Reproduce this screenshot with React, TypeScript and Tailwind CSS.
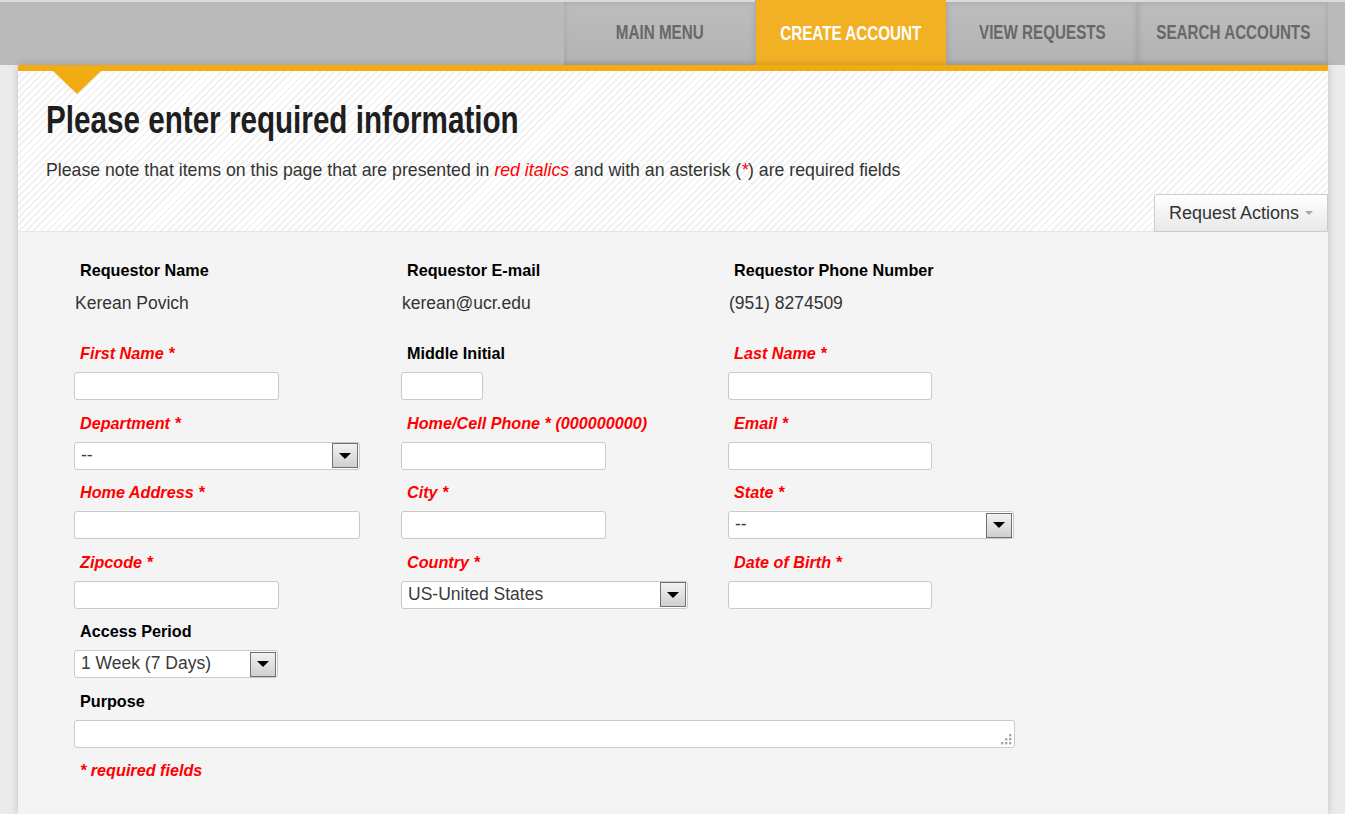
import React from "react";

const ff = { fontFamily: '"Liberation Sans", Arial, sans-serif' };

function Label({ text, req }: { text: string; req?: boolean }) {
  return (
    <div
      className={
        "h-[20px] leading-[20px] mb-[9px] pl-[6px] text-[16.2px] font-bold whitespace-nowrap " +
        (req ? "text-[#f00] italic" : "text-black")
      }
    >
      {text}
    </div>
  );
}

function TextInput({ w }: { w: string }) {
  return (
    <div className={"h-[28px] bg-white border border-[#c9c9c9] rounded-[3px] " + w} />
  );
}

function Select({ w, value }: { w: string; value: string }) {
  return (
    <div
      className={
        "h-[28px] bg-white border border-[#c9c9c9] rounded-[3px] flex items-center justify-between pl-[6px] pr-[1px] " +
        w
      }
    >
      <span className="text-[17.5px] text-[#3a3a3a] leading-none">{value}</span>
      <div className="w-[26px] h-[25px] border border-[#707070] bg-[linear-gradient(#f2f2f2,#cfcfcf)] flex items-center justify-center">
        <div className="w-0 h-0 border-l-[6px] border-r-[6px] border-t-[6px] border-l-transparent border-r-transparent border-t-black" />
      </div>
    </div>
  );
}

function Field({
  label,
  req,
  children,
}: {
  label: string;
  req?: boolean;
  children: React.ReactNode;
}) {
  return (
    <div className="mb-[12.5px]">
      <Label text={label} req={req} />
      {children}
    </div>
  );
}

const tabs = ["MAIN MENU", "CREATE ACCOUNT", "VIEW REQUESTS", "SEARCH ACCOUNTS"];

export default function App() {
  return (
    <div className="min-h-[814px] w-[1345px] bg-[#ebebeb] overflow-hidden" style={ff}>
      {/* top bar */}
      <div className="h-[65px] bg-[#bababa] border-t-2 border-[#dcdcdc] flex justify-end">
        <div className="flex mr-[17px] h-full">
          {tabs.map((t, i) => {
            const active = i === 1;
            return (
              <div
                key={t}
                className={
                  "w-[191px] flex items-center justify-center " +
                  (active
                    ? "bg-[#f2b124] -mt-[2px] h-[65px] text-white"
                    : "h-full pb-[3px] bg-[linear-gradient(#bdbdbd,#b3b3b3)] text-[#686868] shadow-[inset_0_0_6px_rgba(0,0,0,0.12)]") +
                  (i > 0 ? " border-l border-[#a9a9a9]" : "")
                }
              >
                <span className="inline-block text-[20px] font-bold scale-x-[0.76] whitespace-nowrap">
                  {t}
                </span>
              </div>
            );
          })}
        </div>
      </div>

      {/* panel */}
      <div className="ml-[18px] mr-[17px] bg-[#f4f4f4] border-t-[6px] border-[#f0ac12] relative shadow-[0_0_8px_rgba(0,0,0,0.18)] min-h-[749px]">
        <div className="absolute left-[35px] top-0 w-0 h-0 border-l-[24px] border-r-[24px] border-t-[23px] border-l-transparent border-r-transparent border-t-[#f0ac12] z-10" />
        {/* header */}
        <div className="h-[161px] pt-[27px] bg-[repeating-linear-gradient(135deg,#ffffff_0px,#ffffff_3px,#f2f2f2_3px,#f2f2f2_5px)] border-b border-[#e6e6e6]">
          <h1 className="pl-[28px] h-[44px] leading-[44px] whitespace-nowrap">
            <span className="inline-block origin-left scale-x-[0.78] text-[38px] font-bold text-[#1e1e1e] whitespace-nowrap">
              Please enter required information
            </span>
          </h1>
          <p className="pl-[28px] mt-[17px] h-[22px] leading-[22px] text-[17.7px] text-[#333] whitespace-nowrap">
            Please note that items on this page that are presented in{" "}
            <span className="italic text-[#f00]">red italics</span> and with an asterisk (
            <span className="italic text-[#f00]">*</span>) are required fields
          </p>
          <div className="flex justify-end mt-[13px]">
            <div className="h-[38px] w-[174px] border border-[#cccccc] bg-[linear-gradient(#ffffff,#e8e8e8)] flex items-center justify-center gap-[6px] text-[18px] text-[#333] rounded-tl-[2px]">
              <span>Request Actions</span>
              <div className="w-0 h-0 border-l-[4px] border-r-[4px] border-t-[4px] border-l-transparent border-r-transparent border-t-[#aaa]" />
            </div>
          </div>
        </div>

        {/* form */}
        <div className="pl-[56px] pt-[28px] pb-[30px]">
          <div className="grid grid-cols-[327px_327px_327px]">
            {[
              ["Requestor Name", "Kerean Povich"],
              ["Requestor E-mail", "kerean@ucr.edu"],
              ["Requestor Phone Number", "(951) 8274509"],
            ].map(([l, v]) => (
              <div key={l} className="mb-[29px]">
                <div className="h-[20px] leading-[20px] pl-[6px] text-[16.2px] font-bold text-black">{l}</div>
                <div className="mt-[12px] h-[22px] leading-[22px] pl-[1px] text-[17.5px] text-[#333]">{v}</div>
              </div>
            ))}

            <Field label="First Name *" req>
              <TextInput w="w-[205px]" />
            </Field>
            <Field label="Middle Initial">
              <TextInput w="w-[82px]" />
            </Field>
            <Field label="Last Name *" req>
              <TextInput w="w-[204px]" />
            </Field>

            <Field label="Department *" req>
              <Select w="w-[286px]" value="--" />
            </Field>
            <Field label="Home/Cell Phone * (000000000)" req>
              <TextInput w="w-[205px]" />
            </Field>
            <Field label="Email *" req>
              <TextInput w="w-[204px]" />
            </Field>

            <Field label="Home Address *" req>
              <TextInput w="w-[286px]" />
            </Field>
            <Field label="City *" req>
              <TextInput w="w-[205px]" />
            </Field>
            <Field label="State *" req>
              <Select w="w-[286px]" value="--" />
            </Field>

            <Field label="Zipcode *" req>
              <TextInput w="w-[205px]" />
            </Field>
            <Field label="Country *" req>
              <Select w="w-[287px]" value="US-United States" />
            </Field>
            <Field label="Date of Birth *" req>
              <TextInput w="w-[204px]" />
            </Field>

            <Field label="Access Period">
              <Select w="w-[204px]" value="1 Week (7 Days)" />
            </Field>
          </div>

          <div>
            <Label text="Purpose" />
            <div className="relative w-[941px] h-[28px] bg-white border border-[#c9c9c9] rounded-[3px]">
              <svg className="absolute right-[2px] bottom-[2px]" width="12" height="12" viewBox="0 0 12 12">
                <rect x="9" y="1" width="2.4" height="2.4" fill="#aaa" />
                <rect x="5" y="5" width="2.4" height="2.4" fill="#aaa" />
                <rect x="9" y="5" width="2.4" height="2.4" fill="#aaa" />
                <rect x="1" y="9" width="2.4" height="2.4" fill="#aaa" />
                <rect x="5" y="9" width="2.4" height="2.4" fill="#aaa" />
                <rect x="9" y="9" width="2.4" height="2.4" fill="#aaa" />
              </svg>
            </div>
          </div>
          <div className="mt-[11px] pl-[6px] h-[22px] leading-[22px] text-[16.2px] font-bold italic text-[#f00]">
            * required fields
          </div>
        </div>
      </div>
    </div>
  );
}
